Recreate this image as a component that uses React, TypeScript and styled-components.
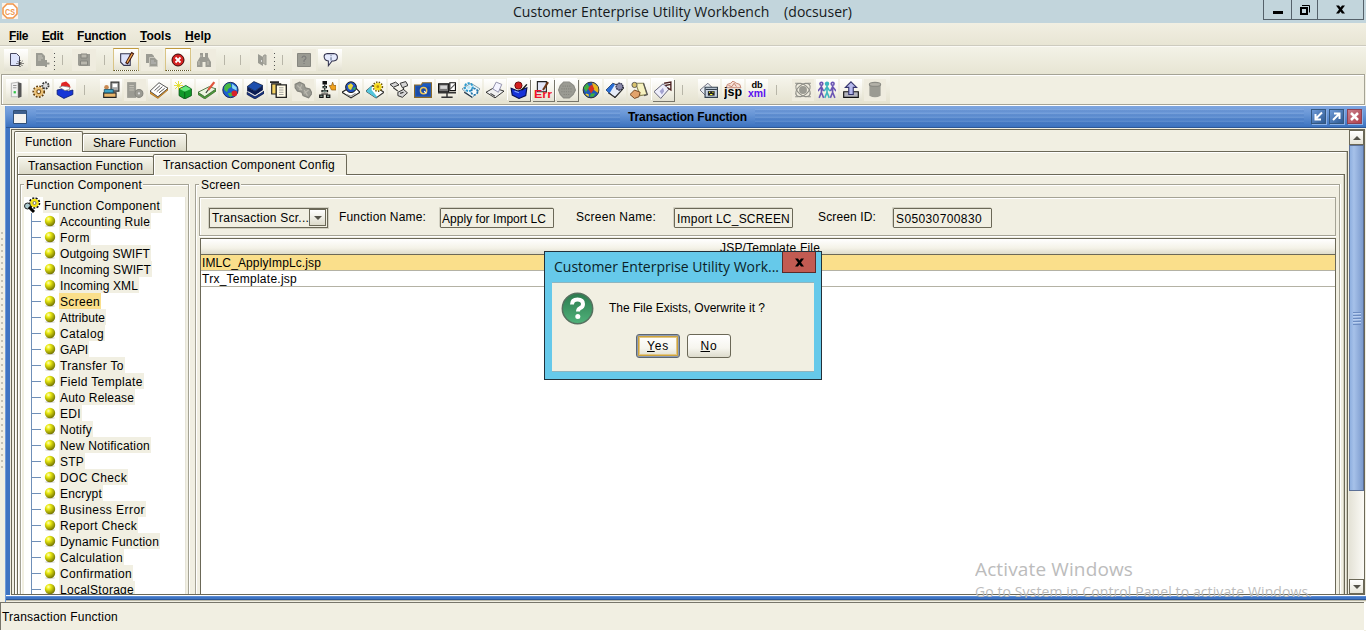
import React from 'react';
import styled, { createGlobalStyle, css } from 'styled-components';

const UI = '"Liberation Sans", Arial, sans-serif';
const SEGOE = '"Open Sans", "Noto Sans", sans-serif';
const cream = '#f1efe2';
const olive = '#6b6857';
const line = '#a5a395';

const Global = createGlobalStyle`
  * { box-sizing: border-box; }
  html, body { margin: 0; padding: 0; overflow: hidden; background: ${cream}; }
  body { font: 12px ${UI}; color: #000; }
  u { text-underline-offset: 1px; text-decoration-thickness: 1px; }
`;

/* Text tracked so that it fills a given pixel width. */
const measurer = document.createElement('canvas').getContext('2d')!;
function tracking(text: string, width: number, font: string) {
  measurer.font = font;
  return (width - measurer.measureText(text).width) / text.length;
}
const Tracked = styled.span`
  white-space: pre;
  display: inline-block;
`;
function Fit({ t, w, font = `12px ${UI}`, u }: { t: string; w: number; font?: string; u?: number }) {
  return (
    <Tracked style={{ font, letterSpacing: tracking(t, w, font), lineHeight: 'inherit' }}>
      {u === undefined ? t : <>{t.slice(0, u)}<u>{t[u]}</u>{t.slice(u + 1)}</>}
    </Tracked>
  );
}

const Page = styled.div`
  position: relative;
  width: 1366px;
  height: 631px;
  display: flex;
  flex-direction: column;
  overflow: hidden;
  background: ${cream};
`;

/* ---------- main window caption ---------- */
const Caption = styled.header`
  height: 23px;
  flex: none;
  background: #c2d5dc;
  display: flex;
  align-items: flex-start;
  padding-left: 2px;
`;
const CaptionText = styled.div`
  flex: 1;
  line-height: 23px;
  padding-left: 495px;
  color: #15191b;
`;
const Logo = styled.svg`
  margin-top: 3px;
  flex: none;
`;
const WinButtons = styled.div`
  display: flex;
  height: 20px;
  margin-right: 2px;
  border: 1px solid #55616a;
  border-top: 0;
`;
const WinButton = styled.div<{ $w: number }>`
  width: ${p => p.$w}px;
  display: flex;
  align-items: center;
  justify-content: center;
  & + & { border-left: 1px solid #55616a; }
`;

/* ---------- menu ---------- */
const Menu = styled.nav`
  height: 23px;
  flex: none;
  display: flex;
  gap: 14px;
  padding-left: 9px;
  line-height: 26px;
  background: linear-gradient(#f1efe2, #e8e5d4);
  border-bottom: 1px solid #cdcbbf;
`;

/* ---------- tool bars ---------- */
const ToolsTop = styled.div`
  height: 28px;
  flex: none;
  display: flex;
  align-items: flex-start;
  padding: 2px 0 0 4px;
  border-top: 1px solid #fbfaf4;
  background: linear-gradient(#f3f2e7, #e7e5d3);
`;
const ToolsMain = styled.div`
  height: 31px;
  flex: none;
  margin: 0 1px 0 1px;
  display: flex;
  gap: 2px;
  padding: 4px 0 0 4px;
  border: 1px solid ${line};
  box-shadow: inset 1px 1px #fff, 0 1px #fff;
  background: linear-gradient(#f7f6ee, #e5e2cf) 0 0 / 888px 100% no-repeat ${cream};
`;
type TileLook = 'plain' | 'off' | 'raised' | 'active';
const Tile = styled.div<{ $look: TileLook; $w?: number; $ml?: number }>`
  width: ${p => p.$w ?? 22}px;
  height: 22px;
  flex: none;
  margin-left: ${p => p.$ml ?? 0}px;
  display: flex;
  align-items: center;
  justify-content: center;
  background: linear-gradient(#ffffff, #f3f1e6 60%, #e3e1d2);
  ${p => p.$look === 'off' && css`background: #efecdf;`}
  ${p => p.$look === 'raised' && css`
    box-shadow: 1px 1px 0 0 #77756a, -1px -1px 0 0 #fff;
  `}
  ${p => p.$look === 'active' && css`
    height: 23px;
    margin-top: -1px;
    border: 1px solid #d9c486;
    border-top-color: #c09a3e;
    border-bottom: 1px dotted #5a5223;
  `}
`;
const Sep = styled.i<{ $l: number; $r: number; $dots?: boolean }>`
  flex: none;
  width: 1px;
  height: ${p => (p.$dots ? 18 : 10)}px;
  margin: ${p => (p.$dots ? 4 : 6)}px ${p => p.$r}px 0 ${p => p.$l}px;
  background: #b8b6a8;
  ${p => p.$dots && css`background: repeating-linear-gradient(#555 0 1px, transparent 1px 4px);`}
`;

/* ---------- internal frame ---------- */
const Frame = styled.section`
  height: 496px;
  flex: none;
  margin: 1px 0 0 5px;
  display: flex;
  flex-direction: column;
  border-left: 1px solid #6f9bd8;
`;
const FrameTitle = styled.div`
  height: 22px;
  flex: none;
  display: flex;
  align-items: center;
  padding: 0 4px 0 7px;
  background: linear-gradient(#7fa6e0, #6896d6 40%, #3c72bf);
  border-bottom: 1px solid #2c5796;
`;
const Stripes = styled.div<{ $w: number; $l: number }>`
  width: ${p => p.$w}px;
  height: 16px;
  margin-left: ${p => p.$l}px;
  flex: none;
  background: repeating-linear-gradient(rgba(255,255,255,.07) 0 1px, rgba(30,80,160,.12) 1px 3px, transparent 3px 4px);
`;
const FrameButtons = styled.div`
  display: flex;
  gap: 3px;
  margin-left: auto;
  margin-right: 0;
`;
const FrameButton = styled.div<{ $red?: boolean }>`
  width: 15px;
  height: 15px;
  border: 1px solid ${p => (p.$red ? '#8d4052' : '#34577f')};
  box-shadow: 1px 1px #8bb0e6;
  background: ${p => (p.$red ? 'linear-gradient(135deg,#c9808c,#b0404c)' : 'linear-gradient(135deg,#6f9bd8,#2e5a92)')};
  svg { display: block; }
`;
const FrameBody = styled.div`
  height: 467px;
  flex: none;
  display: flex;
  border-left: 4px solid #3f74c2;
  background: ${cream};
  overflow: hidden;
`;
const FrameInner = styled.div`
  flex: 1;
  display: flex;
  min-width: 0;
  margin-left: 1px;
  margin-top: 1px;
  border: 1px solid ${olive};
  margin-right: 1px;
`;
const FrameFoot = styled.div`
  height: 6px;
  flex: none;
  background: linear-gradient(#fff 0 1px, #5a8bd6 1px 2px, #3f74c2 2px 4px, #2a5699 4px 5px, #bdbaa9 5px 6px);
`;
const Column = styled.div`
  flex: 1;
  min-width: 0;
  padding: 1px 1px 0 2px;
  display: flex;
  flex-direction: column;
`;
const TabRow = styled.div`
  display: flex;
  align-items: flex-end;
  height: 21px;
  flex: none;
  margin-bottom: -1px;
  z-index: 1;
`;
const Tab = styled.div<{ $on?: boolean; $w: number; $pad: number }>`
  width: ${p => p.$w}px;
  height: ${p => (p.$on ? 21 : 19)}px;
  padding-left: ${p => p.$pad}px;
  line-height: ${p => (p.$on ? 20 : 19)}px;
  border: 1px solid ${olive};
  border-bottom: ${p => (p.$on ? '0' : `1px solid ${olive}`)};
  border-radius: 2px 2px 0 0;
  box-shadow: inset 1px 1px #fff;
  background: ${p => (p.$on ? cream : 'linear-gradient(#f6f5ec, #dcdac8)')};
  & + & { margin-left: -1px; }
`;
const TabPanel = styled.div<{ $inner?: boolean }>`
  flex: 1;
  min-height: 0;
  display: flex;
  flex-direction: column;
  border: 1px solid ${olive};
  border-bottom: 0;
  padding: ${p => (p.$inner ? '2px 4px 0 2px' : '2px 2px 0 2px')};
  box-shadow: inset -1px 0 #cfcdbd, inset 1px 1px #fff;
`;
const Split = styled.div`
  flex: 1;
  min-height: 0;
  display: flex;
  gap: 6px;
`;
const Group = styled.div<{ $w?: number }>`
  ${p => (p.$w ? `width: ${p.$w}px; flex: none;` : 'flex: 1; min-width: 0;')}
  display: flex;
  flex-direction: column;
`;
const Legend = styled.div`
  height: 15px;
  line-height: 17px;
  flex: none;
  padding-left: 4px;
  margin-bottom: -8px;
  z-index: 1;
  span { background: ${cream}; padding: 0 1px 0 2px; }
`;
const GroupBox = styled.div`
  flex: 1;
  min-height: 0;
  display: flex;
  flex-direction: column;
  border: 1px solid ${line};
  border-bottom: 0;
  box-shadow: inset 1px 1px #fff, 1px 0 #fff;
  padding: 12px 3px 0 3px;
`;

/* ---------- tree ---------- */
const Tree = styled.div`
  flex: 1;
  margin-right: -1px;
  border-right: 1px solid #e6e4d8;
  min-height: 0;
  overflow: hidden;
  background: #fff;
`;
const Root = styled.div`
  height: 16px;
  display: flex;
  line-height: 18px;
`;
const RootLabel = styled.div`
  background: ${cream};
  padding: 0 2px 0 1px;
  margin-left: 1px;
`;
const Node = styled.div`
  height: 16px;
  margin-left: 7px;
  display: flex;
  align-items: center;
  border-left: 1px solid #6f8fb8;
  &::before { content: ''; width: 9px; height: 1px; background: #6f8fb8; margin-right: 3px; flex: none; }
`;
const NodeLabel = styled.div<{ $on?: boolean }>`
  height: 16px;
  line-height: 18px;
  margin-left: 3px;
  padding: 0 1px 0 1px;
  background: ${p => (p.$on ? '#fadf8b' : cream)};
`;

/* ---------- screen form ---------- */
const Form = styled.div`
  height: 39px;
  flex: none;
  display: flex;
  align-items: center;
  padding-left: 9px;
  border: 1px solid ${line};
  box-shadow: inset 1px 1px #fff, 0 1px #fff;
`;
const Combo = styled.div`
  width: 119px;
  height: 20px;
  margin-top: 3px;
  display: flex;
  justify-content: space-between;
  border: 1px solid ${olive};
  outline: 1px solid #d2d0c2;
  line-height: 19px;
  padding-left: 2px;
`;
const ComboArrow = styled.div`
  width: 17px;
  height: 17px;
  margin-right: 1px;
  border: 1px solid ${olive};
  background: linear-gradient(#fff, #dddbcb);
  display: flex;
  align-items: center;
  justify-content: center;
`;
const FieldLabel = styled.label<{ $ml: number; $w: number }>`
  width: ${p => p.$w}px;
  margin-left: ${p => p.$ml}px;
  line-height: 16px;
`;
const Field = styled.div<{ $w: number; $pl: number }>`
  width: ${p => p.$w}px;
  height: 20px;
  margin-top: 3px;
  padding-left: ${p => p.$pl}px;
  line-height: 20px;
  border: 1px solid ${olive};
  border-radius: 1px;
  box-shadow: -1px -1px #d2d0c2;
`;
const Table = styled.div`
  flex: 1;
  min-height: 0;
  margin: 2px 0 0 1px;
  border: 1px solid ${olive};
  border-bottom: 0;
  background: #fff;
`;
const TableHead = styled.div`
  height: 16px;
  text-align: center;
  line-height: 18px;
  overflow: hidden;
  border-bottom: 1px solid ${olive};
  padding-left: 4px;
  background: linear-gradient(#fff, #f4f2e8 60%, #dedccb);
`;
const TableRow = styled.div<{ $on?: boolean }>`
  height: 16px;
  line-height: 16px;
  padding-left: 1px;
  border-bottom: 1px solid #b4b2a4;
  background: ${p => (p.$on ? '#fadf8b' : '#fff')};
`;

/* ---------- scroll bar ---------- */
const Scroll = styled.div`
  width: 15px;
  flex: none;
  display: flex;
  flex-direction: column;
  background: linear-gradient(90deg, #e4e2d6, #fbfaf6);
`;
const ScrollButton = styled.div`
  height: 15px;
  flex: none;
  border: 1px solid ${olive};
  background: linear-gradient(#fff, #e6e4d8);
  display: flex;
  align-items: center;
  justify-content: center;
`;
const Thumb = styled.div`
  height: 346px;
  flex: none;
  border: 1px solid #5c7096;
  background: linear-gradient(90deg, #8fb0e0, #a6c1e9 30%, #7c9bcd);
  display: flex;
  align-items: center;
  justify-content: center;
`;
const Grip = styled.div`
  width: 8px;
  height: 13px;
  background: repeating-linear-gradient(#6d8dc2 0 1px, #b9cff0 1px 2px, transparent 2px 3px);
`;
const Track = styled.div`
  flex: 1;
`;

/* ---------- status bar, overlays ---------- */
const Status = styled.footer`
  height: 28px;
  flex: none;
  line-height: 29px;
  margin-right: 2px;
  border-top: 1px solid #77756a;
  border-left: 1px solid #77756a;
  padding-left: 1px;
  box-shadow: 0 2px #fff, 2px 0 #fff;
`;
const SideGrip = styled.div`
  position: absolute;
  left: 1px;
  top: 232px;
  width: 3px;
  height: 240px;
  background: radial-gradient(circle at 1px 1px, #c4c2b5 1px, transparent 1.2px) 0 0 / 3px 6px;
`;
const Watermark = styled.div`
  position: absolute;
  left: 975px;
  top: 556px;
  height: 42px;
  overflow: hidden;
  color: #bcbcbc;
  line-height: 26px;
  div + div { line-height: 18px; margin-top: -2px; }
`;
const Dialog = styled.div`
  position: absolute;
  left: 544px;
  top: 251px;
  width: 278px;
  height: 129px;
  border: 1px solid #223039;
  background: #66c9ea;
  display: flex;
  flex-direction: column;
  padding: 0 7px 7px 7px;
`;
const DialogTitle = styled.div`
  height: 30px;
  flex: none;
  display: flex;
  justify-content: space-between;
  line-height: 30px;
  padding-left: 2px;
  margin-right: -2px;
  color: #0b1f28;
`;
const DialogClose = styled.div`
  width: 34px;
  height: 21px;
  background: #c25b52;
  border: 1px solid #5a2b2a;
  border-top: 0;
  display: flex;
  align-items: center;
  justify-content: center;
`;
const DialogBody = styled.div`
  flex: 1;
  border: 1px solid #8fb5bf;
  border-width: 1px 0 1px 0;
  background: ${cream};
  padding: 8px 0 0 9px;
`;
const Message = styled.div`
  display: flex;
  align-items: center;
  gap: 15px;
  height: 34px;
`;
const Buttons = styled.div`
  display: flex;
  gap: 7px;
  margin: 9px 0 0 75px;
`;
const Button = styled.div<{ $focus?: boolean }>`
  width: 44px;
  height: 24px;
  line-height: 23px;
  text-align: center;
  border: 1px solid ${olive};
  border-radius: 3px;
  background: linear-gradient(#fff, #f6f5ee 60%, #dddbcc);
  ${p => p.$focus && css`
    border-color: #5c6672;
    box-shadow: inset 0 0 0 1px #8e9cb5, inset 0 0 0 2px #cda33c, inset 0 0 0 3px #e2c684;
  `}
`;

/* ---------- icons, 16 x 16 ---------- */
const G = '#9b9b93';
const icons: Record<string, React.ReactNode> = {
  newDoc: <><path d="M2.500 1.500h6l3 3v9h-9z" fill="#dde3fb" stroke="#47475f" /><path d="M12 8v7M8.500 11.500h7M9.500 9l5 5M14.500 9l-5 5" stroke="#222" strokeDasharray="1 1" /></>,
  addDoc: <><path d="M2 1h6l3 3v10H2z" fill={G} /><path d="M4 4h4M4 6h5M4 8h3" stroke="#c8c6bc" /><path d="M12 8v7M8.500 11.500h7" stroke={G} strokeWidth="2" /></>,
  save: <><path d="M2 2h12v12H3l-1-1z" fill={G} /><path d="M5 2h6v4H5zM4.500 9h7v4h-7z" fill="#b9b7ad" stroke="#85857e" /></>,
  edit: <><path d="M2.500 2.500h9v11h-6l-3-3z" fill="#dde3fb" stroke="#33334e" /><path d="M14 1.500L8 12" stroke="#3d120c" strokeWidth="3" /><path d="M13.500 2.500L8.500 11" stroke="#f0a850" strokeWidth="1.200" /></>,
  copy: <><path d="M2 2h6l2 2v7H2z" fill={G} /><path d="M5.500 5.500h5l3 3v6h-8z" fill={G} stroke="#c8c6bc" /><path d="M7 9h3M7 11h5" stroke="#bbb" /></>,
  stop: <><circle cx="8" cy="8" r="6" fill="#d42222" stroke="#3c0404" /><path d="M5.500 5.500l5 5M10.500 5.500l-5 5" stroke="#fff" strokeWidth="1.800" /></>,
  find: <><path d="M4 1h3v4h2V1h3v4l3 5v5H9.500v-5h-3v5H1v-5l3-5z" fill={G} /><path d="M3 9v4M12 9v4M5 3v2" stroke="#c0beb4" /></>,
  door: <><path d="M4 2l5 3v9l-5-3z" fill={G} /><path d="M9 5l1-2h2v10l-3-2" fill="#b2b0a6" stroke={G} /><path d="M7.500 8v2" stroke="#ddd" /></>,
  help: <><path d="M1.500 1.500h13v13h-13z" fill={G} stroke="#878780" /><path d="M6 6q0-2 2-2t2 2-2 2v2M8 11v1" fill="none" stroke="#777" /></>,
  info: <><path d="M2 4q0-2 3-2.500h6q3.500.5 3.500 3.500T11 8.500H9.500L6 13V8.500Q2 8 2 4z" fill="#e5eafc" stroke="#33334e" /><path d="M8.500 3v1M8.500 5v3" stroke="#5a6a8a" /></>,
  server: <><path d="M3 2l6-1v13H3z" fill="#f1f1f1" stroke="#bbb" /><path d="M9 1l3 1v12l-3 1z" fill="#555" /><path d="M4.500 4h3M4.500 6h3" stroke="#999" /><path d="M5 9h2v2H5z" fill="#2fc444" /></>,
  gears: <><circle cx="6" cy="9.500" r="4.600" stroke="#5f3b09" strokeWidth="2" strokeDasharray="1.500 1.200" /><circle cx="6" cy="9.500" r="4.200" fill="#edc276" /><circle cx="6" cy="9.500" r="1.700" fill="#fff" stroke="#7d561c" /><circle cx="12" cy="4" r="2.800" fill="#ddd" stroke="#333" strokeWidth="1.600" strokeDasharray="1.500 1" /></>,
  santa: <><path d="M1 8l5-1 5 2 4-1v4l-8 3.500L1 12z" fill="#1636d6" stroke="#081a70" strokeWidth=".7" /><path d="M5 1.500l4-1 3 2.500 1 3-3-1H4z" fill="#e02424" /><path d="M3 5.500l3-1 6 1v2l-4 1z" fill="#fff" stroke="#777" strokeWidth=".6" /></>,
  clerk: <><path d="M8 1h7v8H8z" fill="#aaa" stroke="#333" /><path d="M9.500 2.500h4v3h-4z" fill="#fff" /><path d="M1.500 10.500h11v4h-11z" fill="#e9b66c" stroke="#222" /><circle cx="4" cy="5.500" r="2" fill="#c98952" /><path d="M2 7.500h8v3H2z" fill="#3ea4c8" stroke="#174d63" strokeWidth=".7" /></>,
  serverOff: <><path d="M1 1h8v14H1z" fill={G} /><path d="M3 4h4M3 6h4M3 8h4" stroke="#c3c1b6" /><circle cx="11.500" cy="11" r="3.500" fill={G} stroke="#85857e" /><circle cx="11.500" cy="11" r="1" fill="#ddd" /></>,
  book: <><path d="M0 9v2l7 4.500 9-7.500V6l-9 7z" fill="#e39a2f" stroke="#8b570f" strokeWidth=".5" /><path d="M0 9l8-7.500L16 6.500l-9 7.500z" fill="#fff" stroke="#444" strokeWidth=".8" /><path d="M4 8.500l5-4.500M6 9.500l5-4.500M8 10.500l5-4" stroke="#444" strokeWidth=".8" /></>,
  cube: <><path d="M4.500 7l6-3 5 3v6l-6 3-5-3z" fill="#12992a" stroke="#064d11" strokeWidth=".7" /><path d="M5 7l5.500-2.500L15 7l-5.500 2.500z" fill="#66e87c" /><path d="M9.500 9.500v6" stroke="#0a6a1b" /><path d="M4 0v8M0 4h8M1 1l6 6M7 1L1 7" stroke="#e0dc2a" strokeWidth=".8" /></>,
  pen: <><path d="M0 10l6 4 10-7v2L6 16l-6-4z" fill="#4fa33c" stroke="#244d1b" strokeWidth=".5" /><path d="M0 10l10-5 6 2-10 7z" fill="#eaf5df" stroke="#2d5d24" strokeWidth=".7" /><path d="M14.500 1L9 8" stroke="#e0543c" strokeWidth="2" /><path d="M9 8l-2 2.500" stroke="#333" /></>,
  globe: <><circle cx="7.500" cy="8" r="6.800" fill="#1c5fd2" stroke="#12204f" strokeWidth=".8" /><path d="M2 5q2-3.500 5.500-3l1 3-3 2-1 3-2.500-2z" fill="#47b941" /><path d="M9 2.500l4 3v3l-4-2z" fill="#8fdcf4" /><path d="M5 11l4-1 1 3-3 1z" fill="#47b941" /><circle cx="11" cy="11" r="2.500" fill="#d8222a" /></>,
  books: <><path d="M1 10l7 4 8-5v2l-8 5-7-4z" fill="#16338c" stroke="#061434" strokeWidth=".6" /><path d="M1 5v4l7 4 7-5V4L8 9z" fill="#0b1c52" /><path d="M1 5l6-4.500L15 4 8 9z" fill="#1d4fae" stroke="#061434" strokeWidth=".6" /><path d="M2 9.500l6 3.500 6.500-4" stroke="#e6e9f5" strokeWidth=".8" fill="none" /></>,
  copyWin: <><path d="M1.500 2.500h8v9h-8z" fill="#f4d264" stroke="#222" /><path d="M5.500 3.500h9v11h-9z" fill="#fffbe8" stroke="#222" strokeWidth="1.200" /><path d="M8 6h4M8 8h4M8 10h4M8 12h4" stroke="#999" strokeWidth=".8" /><path d="M0 1h8" stroke="#222" strokeWidth="1.500" /></>,
  puck: <><path d="M1 3l4-2 4 2 1 3 4 1 2 4-3 4-5-2-1-3-4-1-2-3z" fill={G} stroke="#84847c" /><path d="M3 4l4 4M7 3l-2 5M9 11l4-3M9 8l3 5" stroke="#bbb9af" /></>,
  tree: <><path d="M4 0h4v3H4zM4 4.500h4v2H4zM3 8h6v2H3zM1 12h4v3H1zM7 12h4v3H7z" fill="#111" /><path d="M6 3v7M3 11.500h6" stroke="#111" /><path d="M5 5.500h2M4 9h4M2 13.500h2M8 13.500h2" stroke="#b7e0d0" strokeWidth=".8" /><path d="M10 4h2l1-3 1 3h2v4h-4z" fill="#f0a11c" stroke="#8b570f" strokeWidth=".6" /></>,
  globeBook: <><path d="M0 10l5-3h8l3 3-8 5z" fill="#fff" stroke="#222" /><path d="M4 12l4 1.500 4-2.500" stroke="#888" fill="none" /><circle cx="8" cy="5.500" r="4.800" fill="#2252c4" stroke="#111" strokeWidth=".8" /><path d="M5 4l3-2 2 2-2 4-2-1z" fill="#e6d63b" /><path d="M9 7l3-2v3z" fill="#39b54a" /></>,
  sunBook: <><path d="M0 9l6-5 10 6-7 5z" fill="#fff" stroke="#333" /><path d="M0 9l5-5v4l5 6-1 1z" fill="#54c5dc" /><circle cx="10.500" cy="5" r="4" stroke="#6b5300" strokeWidth="1.500" strokeDasharray="1.200 1.200" fill="none" /><circle cx="10.500" cy="5" r="3.300" fill="#f8de22" /><circle cx="10.500" cy="5" r="1.200" fill="#b98c10" /></>,
  cams: <><path d="M0 3l5-2 3 2.500-5 2zM9 2l5-1.500L16 4l-5 2zM7 10l5-2.500 3.500 3-4.500 4-4-1.500z" fill="#d5d5d5" stroke="#222" strokeWidth=".8" /><path d="M3 6l4 3M12 6v2M9 11l3-1" stroke="#333" /></>,
  folder: <><path d="M.5 3.500h6l1-2h8v13H.5z" fill="#1b5bc0" stroke="#8b6a2a" /><path d="M2 5h12v8H2z" fill="#1a4ba8" /><circle cx="8.500" cy="8.500" r="2.800" fill="none" stroke="#f0c95a" strokeWidth="1.300" /><path d="M9 9l2 2" stroke="#fff" /></>,
  monitor: <><path d="M.5 2.500h9v7h-9z" fill="#777" stroke="#111" /><path d="M2 4h6v3H2z" fill="#d4d4d4" /><path d="M10.500 1.500h5v7h-5z" fill="#fff" stroke="#111" /><path d="M11 7l4-4" stroke="#555" /><path d="M0 10.500h16M8 10v4M3 14.500h10" stroke="#333" strokeWidth="1.300" /></>,
  gearBook: <><path d="M0 7l8-5 8 5-7 8z" fill="#eaf6fb" stroke="#6b8a99" strokeWidth=".7" /><circle cx="6" cy="5.500" r="3.500" fill="none" stroke="#2f9bd0" strokeWidth="1.800" strokeDasharray="2 1" /><circle cx="6" cy="5.500" r="1.500" fill="#bce5f5" /><circle cx="11" cy="9.500" r="2.800" fill="#f6fafc" stroke="#2477ab" strokeWidth="1.500" strokeDasharray="2 1" /><path d="M2 10l7 4.500" stroke="#234" /></>,
  scan: <><path d="M0 10l7-4 9 3-8 6z" fill="#f0f0f0" stroke="#222" strokeWidth=".8" /><path d="M6 7l3-6 5 2-3 7z" fill="#f4f4ff" stroke="#8888a4" strokeWidth=".8" /><path d="M4 11l4 2.500" stroke="#444" /></>,
  basket: <><path d="M1 6.500l6 2.500 8-3-1 7-6 2.500-6-3z" fill="#1733d8" stroke="#06104f" /><path d="M4 9l4 1.500" stroke="#7fa0ff" /><circle cx="7.500" cy="4" r="3.200" fill="#d31f1f" stroke="#5e0707" strokeWidth=".8" /><path d="M10.500 8L15 3" stroke="#111" strokeWidth="1.300" /></>,
  err: <><path d="M3 .5h8v9H3z" fill="#e3e6f6" stroke="#222" /><path d="M12.500 1L8 8" stroke="#6b3413" strokeWidth="1.800" /><text x="0" y="15.500" fontFamily="Liberation Sans" fontWeight="700" fontSize="9" fill="#f0122a" textLength="16" lengthAdjust="spacingAndGlyphs">Err</text></>,
  rockOff: <><path d="M5 1h5l4 3 1.500 4-2 4L10 15H5l-3-3L.5 8 2 4z" fill={G} stroke="#8b8b84" /><path d="M4 4.500h8M3 7h10M3 9.500h10M5 12h6" stroke="#85857e" strokeDasharray="1 1" /></>,
  globe2: <><circle cx="8" cy="8" r="7" fill="#1f57b8" stroke="#222" strokeWidth=".8" /><path d="M9 1.500a6.500 6.500 0 015 9l-4-3z" fill="#e8b51b" /><path d="M5 6l4-3 2 4-3 4z" fill="#d53122" /><path d="M1.500 6l3-4 2 3-3 5zM8 11l4 0-2 3-3 0z" fill="#3fae3e" /><path d="M4 11l2 1v2l-3-2z" fill="#f0d030" /></>,
  blueBook: <><path d="M0 8l6-6 10 4-8 9z" fill="#e7edf8" stroke="#222" strokeWidth=".8" /><path d="M0 8l6-6 2 1-5 8z" fill="#2a6ed4" /><circle cx="12" cy="5" r="3" fill="#8a8aa9" stroke="#33334e" strokeWidth="1.200" strokeDasharray="1.500 .6" /><path d="M2 10.500l6 4 7-7.500" stroke="#333" fill="none" /></>,
  hand: <><path d="M5 2h7l3 10-6 1z" fill="#f6f2c0" stroke="#8b8657" /><path d="M12 2l3.500 10-3 1" fill="none" stroke="#555" /><path d="M0 12l4-4 5 2-1 4-4 1.500z" fill="#e2a36c" stroke="#6b3d17" strokeWidth=".8" /><circle cx="4" cy="3.500" r="2.300" fill="#d8c26b" stroke="#555" strokeWidth=".8" /></>,
  tag: <><path d="M0 9.500l8-7L13.500 7 6 15.500z" fill="#eeeefb" stroke="#55556b" strokeWidth=".8" /><path d="M9 2l6-1v7l-3-2M10 4l5-1" fill="none" stroke="#4a2020" strokeWidth="1.200" /><path d="M5 9l3-3 1 3-2 3z" fill="#a3a3d0" /></>,
  camBox: <><path d="M0 8l7-6 4 4v8H6z" fill="#e7ecf2" stroke="#667" strokeWidth=".8" /><path d="M4.500 5.500h11v9h-11z" fill="#c9d4e2" stroke="#33404e" /><path d="M5 7.500h10" stroke="#33404e" /><path d="M7 9h6v4H7z" fill="#222" /><path d="M8 10h1M11 10h1M9 12h2" stroke="#ff3" /></>,
  jsp: <><path d="M2 6l1-3 3-1 2-2 3 2 3 1 1 3z" fill="#f8e2d8" stroke="#c07a66" strokeWidth=".8" /><path d="M4 4l3 1 2-3 2 3" stroke="#c07a66" strokeWidth=".8" /><text x="0" y="13" fill="#000" fontFamily="Liberation Sans" fontWeight="700" fontSize="11.500" textLength="16" lengthAdjust="spacingAndGlyphs">jsp</text></>,
  xml: <><text x="3" y="6.500" fill="#000" fontFamily="Liberation Sans" fontWeight="700" fontSize="8.500" textLength="10" lengthAdjust="spacingAndGlyphs">db</text><text x="0" y="14.500" fontFamily="Liberation Sans" fontWeight="700" fontSize="10" fill="#5a12f0" textLength="16" lengthAdjust="spacingAndGlyphs">xml</text></>,
  atom: <><circle cx="8" cy="8" r="3.500" fill={G} /><g fill="none" stroke="#8f8f88"><ellipse cx="8" cy="8" rx="7.500" ry="4.500" transform="rotate(40 8 8)" /><ellipse cx="8" cy="8" rx="7.500" ry="4.500" transform="rotate(-40 8 8)" /><path d="M1 2h3M12 2h3M1 14h3M12 14h3" /></g></>,
  people: <><g stroke="#6a55b4" strokeWidth="1.400" fill="none"><circle cx="3" cy="2.500" r="1.300" /><path d="M3 4v6l-2 5M3 10l2 5M0 9l3-4 2 4" /><circle cx="13" cy="2.500" r="1.300" /><path d="M13 4v6l-2 5M13 10l2 5M16 9l-3-4-2 4" /></g><g stroke="#3db6bd" strokeWidth="1.400" fill="#3db6bd"><circle cx="8" cy="2.500" r="1.300" /><path d="M8 4v6l-2 5M8 10l2 5M5.500 9L8 5l2.500 4" fill="none" /></g></>,
  upload: <><path d="M1.500 9.500h13v5h-13z" fill="#b4b4bd" stroke="#111" /><path d="M8 .7l5 5h-3V12H6V5.700H3z" fill="#b8bbee" stroke="#33336b" /></>,
  db: <><path d="M3 3v10q5 3 10 0V3z" fill={G} /><ellipse cx="8" cy="3" rx="5" ry="1.800" fill="#b3b1a8" stroke="#8c8c85" /></>,
};
const Icon = ({ n, s = 18 }: { n: string; s?: number }) => (
  <svg width={s} height={s} viewBox="0 0 16 16" fill="none">{icons[n]}</svg>
);

const mainTools: (string | [string, TileLook] | null)[] = [
  'server', 'gears', 'santa', null,
  'clerk', ['serverOff', 'off'], 'book', 'cube', 'pen', 'globe', 'books', 'copyWin', ['puck', 'off'], 'tree',
  'globeBook', 'sunBook', 'cams', 'folder', 'monitor', 'gearBook', 'scan',
  ['basket', 'raised'], ['err', 'raised'], ['rockOff', 'raised'], 'globe2', 'blueBook', 'hand', ['tag', 'raised'], null,
  'camBox', 'jsp', 'xml', null,
  ['atom', 'off'], 'people', 'upload', ['db', 'off'],
];

const menus: [string, number, number][] = [
  ['File', 19, 0], ['Edit', 21, 0], ['Function', 49, 1], ['Tools', 31, 0], ['Help', 26, 0],
];

/* label and the pixel width of its text */
const nodes: [string, number][] = [
  ['Accounting Rule', 90], ['Form', 30], ['Outgoing SWIFT', 90], ['Incoming SWIFT', 91], ['Incoming XML', 78],
  ['Screen', 40], ['Attribute', 45], ['Catalog', 44], ['GAPI', 28], ['Transfer To', 64], ['Field Template', 83],
  ['Auto Release', 74], ['EDI', 21], ['Notify', 32], ['New Notification', 90], ['STP', 24], ['DOC Check', 67],
  ['Encrypt', 42], ['Business Error', 85], ['Report Check', 77], ['Dynamic Function', 99], ['Calculation', 63],
  ['Confirmation', 72], ['LocalStorage', 74],
];

const Ball = () => (
  <svg width="12" height="12" viewBox="0 0 12 12">
    <defs>
      <radialGradient id="ball" cx=".35" cy=".3" r=".75">
        <stop offset="0" stopColor="#ffffc0" /><stop offset=".3" stopColor="#ecec14" /><stop offset="1" stopColor="#6e6e00" />
      </radialGradient>
    </defs>
    <ellipse cx="6" cy="11" rx="5" ry="1" fill="#ddd" />
    <circle cx="6" cy="6" r="5.200" fill="url(#ball)" />
  </svg>
);
const Arrow = ({ up }: { up?: boolean }) => (
  <svg width="8" height="4" viewBox="0 0 8 4"><path d={up ? 'M4 0l4 4H0z' : 'M0 0h8L4 4z'} fill="#55534a" /></svg>
);
const Cross = () => (
  <svg width="9" height="9" viewBox="0 0 9 9"><path d="M0 .5h3l1.500 2L6 .5h3L6 4.500l3 4H6l-1.500-2-1.500 2H0l3-4z" fill="#000" /></svg>
);

export default function App() {
  return (
    <Page>
      <Global />
      <Caption>
        <Logo width="16" height="16" viewBox="0 0 16 16">
          <path d="M0 0h16v16H0z" fill="#fbf3ea" />
          <path d="M5 1h6l4 4v6l-4 4H5l-4-4V5z" fill="#fff" stroke="#f0954a" strokeWidth="1.500" />
          <text x="3" y="11.500" fontFamily="Liberation Sans" fontWeight="700" fontSize="9" fill="#f0954a" textLength="10" lengthAdjust="spacingAndGlyphs">CS</text>
        </Logo>
        <CaptionText><Fit t="Customer Enterprise Utility Workbench    (docsuser)" w={339} font={`14px ${SEGOE}`} /></CaptionText>
        <WinButtons>
          <WinButton $w={27}><svg width="10" height="10"><path d="M0 6h10v3H0z" /></svg></WinButton>
          <WinButton $w={26}><svg width="10" height="10"><path d="M1 3h6v6H1z" fill="none" stroke="#000" strokeWidth="2" /><path d="M2 .5h7.500v7" fill="none" stroke="#000" /></svg></WinButton>
          <WinButton $w={46}><Cross /></WinButton>
        </WinButtons>
      </Caption>

      <Menu>{menus.map(([t, w, u]) => <Fit key={t} t={t} w={w} u={u} font={`bold 12px ${UI}`} />)}</Menu>

      <ToolsTop>
        <Tile $look="plain" $w={24}><Icon n="newDoc" s={16} /></Tile>
        <Tile $look="off" $ml={3} $w={22}><Icon n="addDoc" s={16} /></Tile>
        <Sep $dots $l={1} $r={7} />
        <Sep $l={0} $r={9} />
        <Tile $look="off" $w={24}><Icon n="save" s={16} /></Tile>
        <Sep $l={8} $r={8} />
        <Tile $look="active" $w={26}><Icon n="edit" s={17} /></Tile>
        <Tile $look="off" $w={22} $ml={2}><Icon n="copy" s={16} /></Tile>
        <Tile $look="active" $w={26} $ml={2}><Icon n="stop" s={16} /></Tile>
        <Tile $look="off" $w={24} $ml={1}><Icon n="find" s={16} /></Tile>
        <Sep $l={8} $r={15} />
        <Sep $l={0} $r={9} />
        <Tile $look="off" $w={23}><Icon n="door" s={16} /></Tile>
        <Sep $dots $l={1} $r={7} />
        <Sep $l={0} $r={9} />
        <Tile $look="off" $w={24}><Icon n="help" s={16} /></Tile>
        <Tile $look="plain" $w={24} $ml={2}><Icon n="info" s={17} /></Tile>
      </ToolsTop>

      <ToolsMain>
        {mainTools.map((tool, i) =>
          tool === null ? <Sep key={i} $l={6} $r={13} />
            : typeof tool === 'string' ? <Tile key={i} $look="plain"><Icon n={tool} /></Tile>
              : <Tile key={i} $look={tool[1]}><Icon n={tool[0]} /></Tile>)}
      </ToolsMain>

      <Frame>
        <FrameTitle>
          <svg width="15" height="14"><path d="M.5.500h13v13H.5z" fill="#f3f3f0" stroke="#2f4f77" /><path d="M1 1h12v3H1z" fill="#3d5f8d" /></svg>
          <Stripes $w={584} $l={8} />
          <Stripes $w={0} $l={8} />
          <Fit t="Transaction Function" w={119} font={`bold 12px ${UI}`} />
          <Stripes $w={549} $l={8} />
          <FrameButtons>
            <FrameButton><svg width="13" height="13"><path d="M10 2.500L4.500 8M3.500 4v5.500H9" stroke="#fff" strokeWidth="2" fill="none" /></svg></FrameButton>
            <FrameButton><svg width="13" height="13"><path d="M3 10l5.500-5.500M4 3.500h5.500V9" stroke="#fff" strokeWidth="2" fill="none" /></svg></FrameButton>
            <FrameButton $red><svg width="13" height="13"><path d="M3 3l7 7M10 3l-7 7" stroke="#fff" strokeWidth="2.500" fill="none" /></svg></FrameButton>
          </FrameButtons>
        </FrameTitle>
        <FrameBody>
          <FrameInner>
            <Column>
              <TabRow>
                <Tab $on $w={69} $pad={10}><Fit t="Function" w={47} /></Tab>
                <Tab $w={105} $pad={10}><Fit t="Share Function" w={83} /></Tab>
              </TabRow>
              <TabPanel>
                <TabRow>
                  <Tab $w={137} $pad={10}><Fit t="Transaction Function" w={115} /></Tab>
                  <Tab $on $w={194} $pad={9}><Fit t="Transaction Component Config" w={172} /></Tab>
                </TabRow>
                <TabPanel $inner>
                  <Split>
                    <Group $w={169}>
                      <Legend><Fit t="Function Component" w={116} /></Legend>
                      <GroupBox>
                        <Tree>
                          <Root>
                            <svg width="18" height="16" viewBox="0 0 18 16">
                              <circle cx="10.500" cy="6" r="4.800" stroke="#111" fill="none" strokeWidth="2" strokeDasharray="2 1.300" />
                              <circle cx="10.500" cy="6" r="4.300" fill="#f5e317" />
                              <circle cx="10.500" cy="6" r="1.500" fill="#fff" stroke="#777" />
                              <circle cx="3.500" cy="9" r="3" fill="#a9c9cf" stroke="#222" />
                              <path d="M5 10l5 5" stroke="#000" strokeWidth="3" />
                            </svg>
                            <RootLabel><Fit t="Function Component" w={116} /></RootLabel>
                          </Root>
                          {nodes.map(([t, w]) => (
                            <Node key={t}><Ball /><NodeLabel $on={t === 'Screen'}><Fit t={t} w={w} /></NodeLabel></Node>
                          ))}
                        </Tree>
                      </GroupBox>
                    </Group>
                    <Group>
                      <Legend><Fit t="Screen" w={39} /></Legend>
                      <GroupBox>
                        <Form>
                          <Combo><Fit t="Transaction Scr..." w={97} /><ComboArrow><Arrow /></ComboArrow></Combo>
                          <FieldLabel $ml={11} $w={101}><Fit t="Function Name:" w={87} /></FieldLabel>
                          <Field $w={114} $pl={1}><Fit t="Apply for Import LC" w={104} /></Field>
                          <FieldLabel $ml={22} $w={98}><Fit t="Screen Name:" w={80} /></FieldLabel>
                          <Field $w={119} $pl={2}><Fit t="Import LC_SCREEN" w={113} /></Field>
                          <FieldLabel $ml={25} $w={75}><Fit t="Screen ID:" w={58} /></FieldLabel>
                          <Field $w={99} $pl={2}><Fit t="S05030700830" w={86} /></Field>
                        </Form>
                        <Table>
                          <TableHead><Fit t="JSP/Template File" w={100} /></TableHead>
                          <TableRow $on><Fit t="IMLC_ApplyImpLc.jsp" w={119} /></TableRow>
                          <TableRow><Fit t="Trx_Template.jsp" w={95} /></TableRow>
                        </Table>
                      </GroupBox>
                    </Group>
                  </Split>
                </TabPanel>
              </TabPanel>
            </Column>
            <Scroll>
              <ScrollButton><Arrow up /></ScrollButton>
              <Thumb><Grip /></Thumb>
              <Track />
              <ScrollButton><Arrow /></ScrollButton>
            </Scroll>
          </FrameInner>
        </FrameBody>
        <FrameFoot />
      </Frame>

      <Status><Fit t="Transaction Function" w={116} /></Status>

      <SideGrip />
      <Watermark>
        <div><Fit t="Activate Windows" w={158} font={`19px ${SEGOE}`} /></div>
        <div><Fit t="Go to System in Control Panel to activate Windows." w={337} font={`14px ${SEGOE}`} /></div>
      </Watermark>

      <Dialog>
        <DialogTitle>
          <Fit t="Customer Enterprise Utility Work..." w={225} font={`14px ${SEGOE}`} />
          <DialogClose><Cross /></DialogClose>
        </DialogTitle>
        <DialogBody>
          <Message>
            <svg width="33" height="33" viewBox="0 0 33 33">
              <defs>
                <linearGradient id="q" x2="0" y2="1"><stop offset="0" stopColor="#2c7a4e" /><stop offset="1" stopColor="#4fb27a" /></linearGradient>
              </defs>
              <circle cx="16.500" cy="16.500" r="15.200" fill="url(#q)" stroke="#56705f" strokeWidth="1.500" />
              <path d="M11 12.500q0-5 5.500-5t5.500 4.500q0 3-3 4.200-2 .9-2 3.300" fill="none" stroke="#fff" strokeWidth="4" />
              <circle cx="16.800" cy="24.500" r="2.500" fill="#fff" />
            </svg>
            <Fit t="The File Exists, Overwrite it ?" w={156} />
          </Message>
          <Buttons>
            <Button $focus><Fit t="Yes" w={22} u={0} /></Button>
            <Button><Fit t="No" w={17} u={0} /></Button>
          </Buttons>
        </DialogBody>
      </Dialog>
    </Page>
  );
}
